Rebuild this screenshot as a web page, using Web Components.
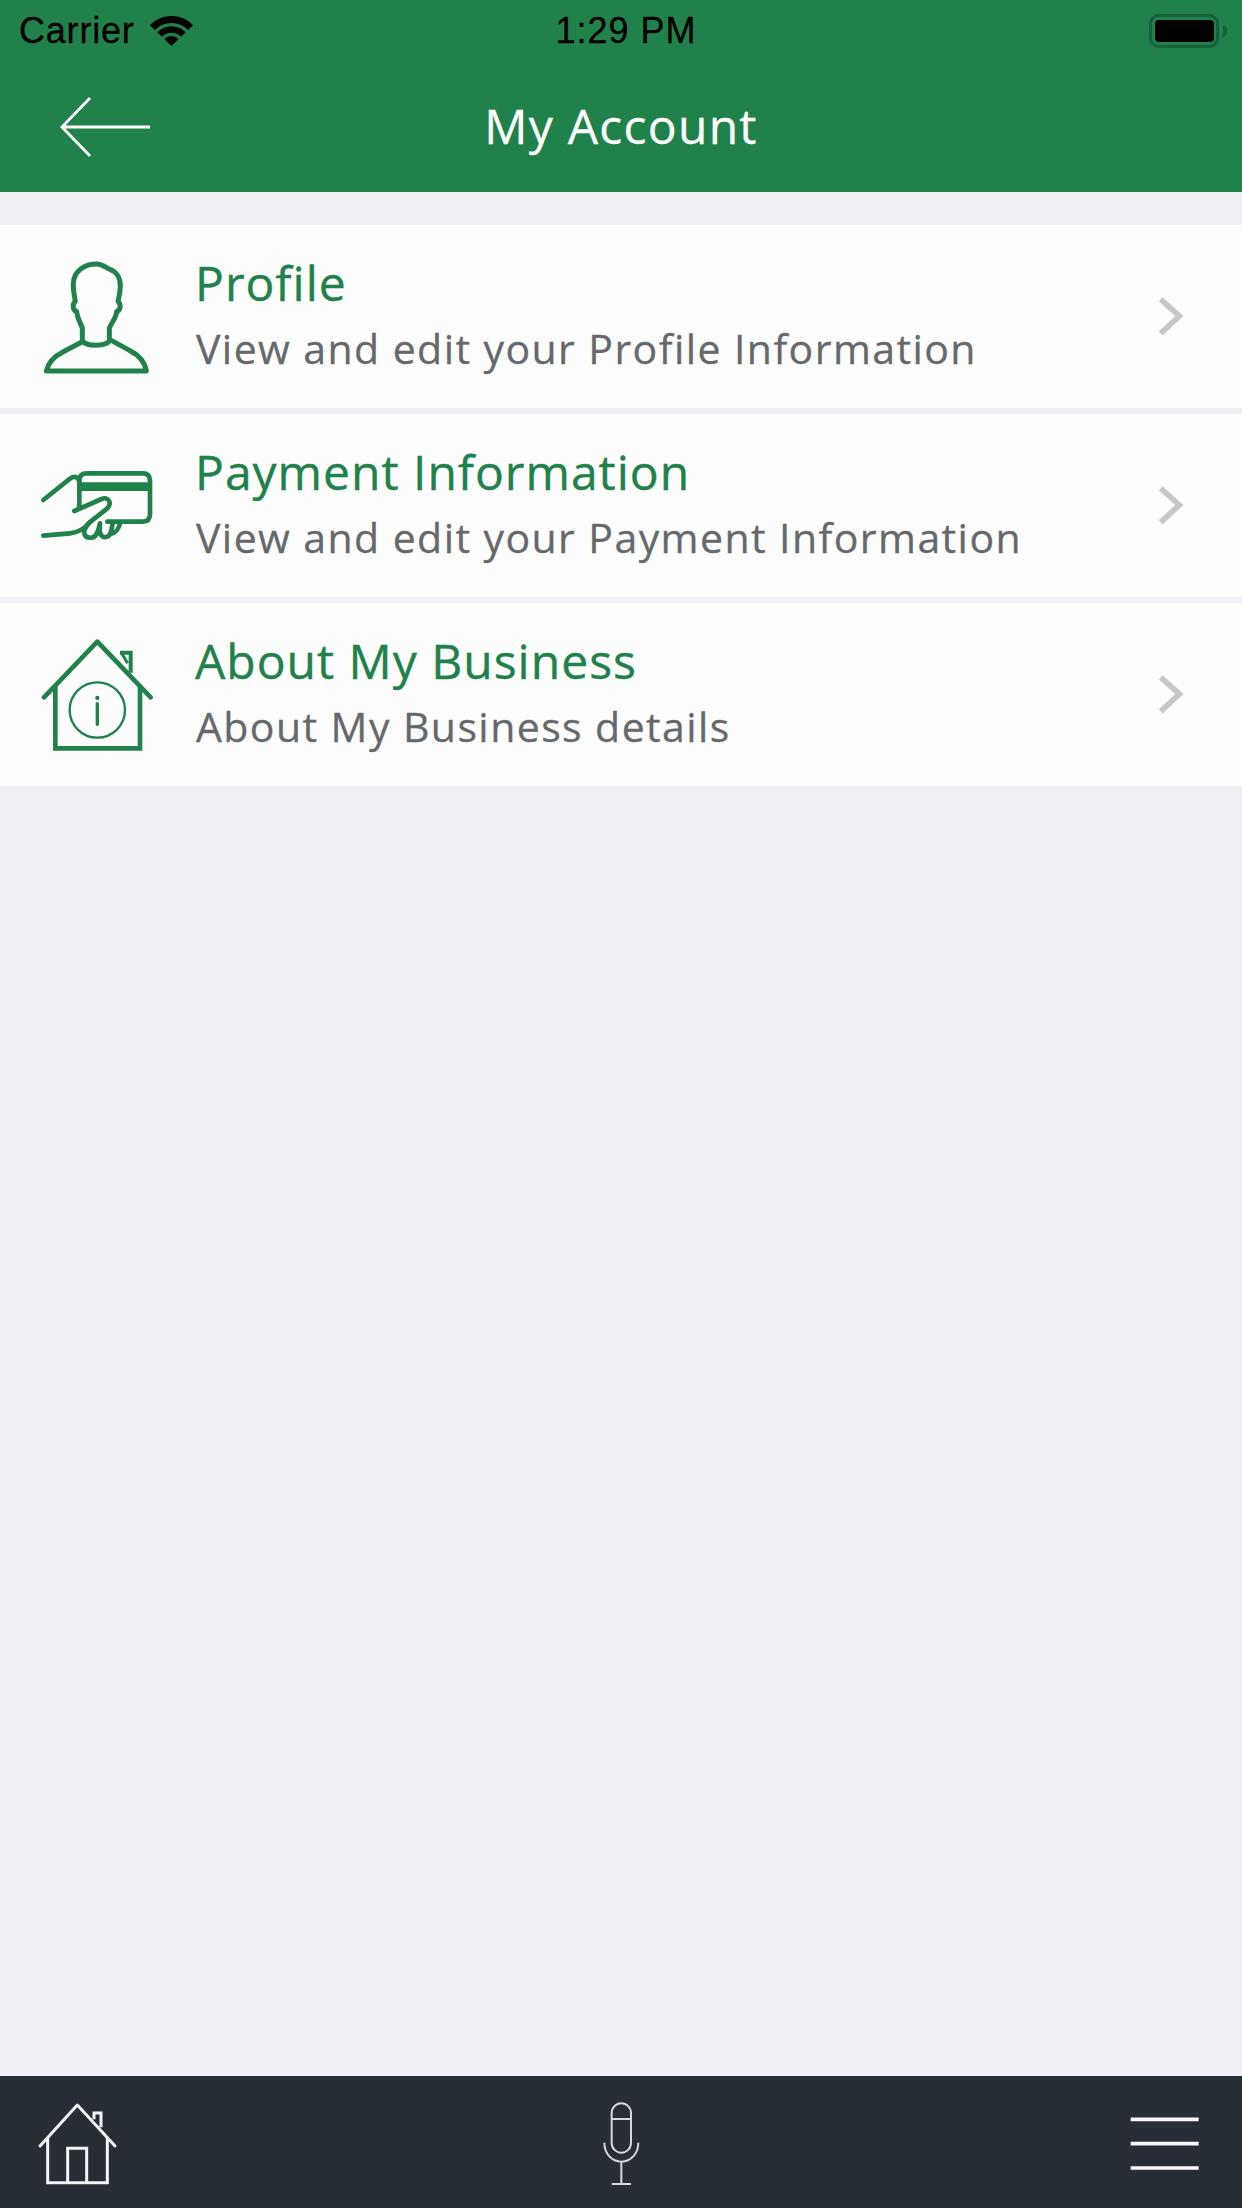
<!DOCTYPE html>
<html lang="en">
<head>
<meta charset="utf-8">
<title>My Account</title>
<style>
  html, body { margin: 0; padding: 0; }
  body { width: 1242px; height: 2208px; overflow: hidden; font-family: "Open Sans", "Noto Sans", sans-serif; }
</style>
</head>
<body>
<account-screen>
  <status-bar slot="header"></status-bar>
  <nav-bar slot="header">My Account</nav-bar>
  <account-row icon="profile">
    <span slot="title">Profile</span>
    View and edit your Profile Information
  </account-row>
  <account-row icon="card">
    <span slot="title">Payment Information</span>
    View and edit your Payment Information
  </account-row>
  <account-row icon="business">
    <span slot="title">About My Business</span>
    About My Business details
  </account-row>
  <tab-bar slot="footer"></tab-bar>
</account-screen>

<script>
// icon strokes are traced in the units of a 3x crop, hence the big viewBoxes
const ICONS = {
  profile: `<svg viewBox="0 -45 510 549" width="170" height="183" fill="none" stroke="#20824a" stroke-width="15" stroke-linejoin="round">
    <path d="M79 393C86 362 108 346 130 335L187 305V264C180 246 172 236 170 215C158 210 156 194 166 184C163 165 159 150 160 130C161 92 195 72 230 72C250 72 258 85 270 88C290 95 302 115 301 140C300 160 297 170 294 184C304 194 302 210 290 215C288 236 275 246 268 264V298L330 332C358 346 374 364 379 393Z"/>
    <path d="M187 302C200 320 255 320 270 302"/>
  </svg>`,
  card: `<svg viewBox="0 -78 510 549" width="170" height="183" fill="none" stroke="#20824a" stroke-width="14" stroke-linecap="round" stroke-linejoin="round">
    <path d="M178 200V122Q178 100 200 100H368Q390 100 390 122V223Q390 245 368 245H262"/>
    <path d="M178 140H390" stroke-width="26" stroke-linecap="butt"/>
    <path d="M70 180L150 116C165 105 178 112 178 130"/>
    <path d="M163 213L245 177C265 168 277 190 262 205L208 248C195 265 180 277 150 280L70 287"/>
    <path d="M208 248C180 280 195 295 215 293C232 292 236 270 240 250C235 290 250 295 262 290C275 285 275 265 278 248M300 250C296 268 290 278 272 282"/>
  </svg>`,
  business: `<svg viewBox="0 -51 510 549" width="170" height="183" fill="none" stroke="#20824a">
    <path d="M72 232L232 65L392 232" stroke-width="14" stroke-linecap="round" stroke-linejoin="round"/>
    <path d="M106 200V385H360V200" stroke-width="14"/>
    <path d="M300 98H332V158" stroke-width="12"/>
    <path d="M305 100L323 130" stroke-width="9"/>
    <circle cx="232" cy="270" r="83" stroke-width="7"/>
    <circle cx="232" cy="234" r="6.5" fill="#20824a" stroke="none"/>
    <path d="M232 251V313" stroke-width="10" stroke-linecap="round"/>
  </svg>`,
  chevron: `<svg viewBox="0 -135 336 549" width="112" height="183" fill="none" stroke="#c7c8cb" stroke-width="17">
    <path d="M92 88L148 138L92 190"/>
  </svg>`,
  home: `<svg viewBox="0 48 360 396" width="120" height="132" fill="none" stroke="#f4f5f5" stroke-width="9">
    <path d="M60 258L172 135L285 258" stroke-linecap="round" stroke-linejoin="round"/>
    <path d="M83 232V368H262V232M143 368V265H200V368M222 178V159H243V202"/>
  </svg>`,
  mic: `<svg viewBox="0 48 300 396" width="100" height="132" fill="none" stroke="#d6d8d9" stroke-width="6">
    <rect x="125" y="130" width="58" height="148" rx="29"/>
    <path d="M125 177H183M103 248C103 280 125 305 154 305C183 305 205 280 205 248M154 305V372M125 372H183"/>
  </svg>`,
  menu: `<svg viewBox="0 48 426 396" width="142" height="132" fill="none" stroke="#f7f8f8" stroke-width="11">
    <path d="M92 178H296M92 251H296M92 324H296"/>
  </svg>`
};

class AccountScreen extends HTMLElement {
  connectedCallback() {
    this.attachShadow({ mode: 'open' });
    this.shadowRoot.innerHTML = `
      <style>
        :host { display: flex; flex-direction: column; height: 2208px; background: #efeff4; }
        main { flex: 1; display: flex; flex-direction: column; gap: 6px; padding-top: 33px; }
      </style>
      <slot name="header"></slot>
      <main><slot></slot></main>
      <slot name="footer"></slot>
    `;
  }
}

class StatusBar extends HTMLElement {
  connectedCallback() {
    this.attachShadow({ mode: 'open' });
    this.shadowRoot.innerHTML = `
      <style>
        :host {
          display: grid;
          grid-template-columns: 1fr auto 1fr;
          align-items: center;
          height: 62px;
          padding: 0 15px 0 19px;
          background: #20824a;
          color: #000;
          font: 36px "Liberation Sans", Arial, sans-serif;
          letter-spacing: 0.8px;
          -webkit-text-stroke: 0.3px #000;
        }
        .left { display: flex; align-items: center; gap: 15px; }
        .time { padding-left: 6px; letter-spacing: 1px; }
        .battery { justify-self: end; display: block; }
      </style>
      <div class="left">
        <span>Carrier</span>
        <svg width="43" height="30" viewBox="0 0 43 30">
          <g fill="none" stroke="#000">
            <path d="M2.4 11.6A26.5 26.5 0 0 1 40.6 11.6" stroke-width="7"/>
            <path d="M9.6 18.5A16.5 16.5 0 0 1 33.4 18.5" stroke-width="6.5"/>
          </g>
          <path d="M21.5 30L14.3 23A10 10 0 0 1 28.7 23Z"/>
        </svg>
      </div>
      <span class="time">1:29 PM</span>
      <svg class="battery" width="78" height="34" viewBox="0 0 78 34">
        <rect x="1.5" y="1.5" width="67" height="31" rx="8" fill="none" stroke="#17603a" stroke-width="3"/>
        <rect x="6" y="6" width="59" height="22" rx="4" fill="#000"/>
        <path d="M74 11C77 12 78 14 78 17C78 20 77 22 74 23Z" fill="#17603a"/>
      </svg>
    `;
  }
}

class NavBar extends HTMLElement {
  connectedCallback() {
    this.attachShadow({ mode: 'open' });
    this.shadowRoot.innerHTML = `
      <style>
        :host {
          display: flex;
          align-items: center;
          justify-content: center;
          position: relative;
          height: 130px;
          padding-bottom: 3px;
          box-sizing: border-box;
          background: #20824a;
          color: #fff;
          font: 400 48px/1 "Open Sans", "Noto Sans", sans-serif;
          letter-spacing: 1.25px;
          -webkit-text-stroke: 0.3px #fff;
        }
        svg { position: absolute; left: 60px; top: 35px; }
      </style>
      <svg width="92" height="60" viewBox="0 0 92 60" fill="none" stroke="#fff" stroke-width="2.8">
        <path d="M30 1L2 30L30 59M2 30H90"/>
      </svg>
      <slot></slot>
    `;
  }
}

class AccountRow extends HTMLElement {
  connectedCallback() {
    this.attachShadow({ mode: 'open' });
    const icon = ICONS[this.getAttribute('icon')] || '';
    this.shadowRoot.innerHTML = `
      <style>
        :host { display: flex; align-items: center; height: 183px; padding-left: 20px; background: #fdfdfe; }
        .icon { width: 176px; height: 183px; flex: none; }
        .text { flex: 1; display: flex; flex-direction: column; padding-bottom: 3px; }
        .title { color: #20824a; font: 48px/66px "Open Sans", "Noto Sans", sans-serif; letter-spacing: 1px; margin-left: -1px; -webkit-text-stroke: 0.4px #20824a; }
        .sub { color: #66696b; font: 41px/65px "Open Sans", "Noto Sans", sans-serif; letter-spacing: 1.42px; -webkit-text-stroke: 0.3px #66696b; }
        .chevron { width: 112px; height: 183px; flex: none; }
      </style>
      <div class="icon">${icon}</div>
      <div class="text">
        <div class="title"><slot name="title"></slot></div>
        <div class="sub"><slot></slot></div>
      </div>
      <div class="chevron">${ICONS.chevron}</div>
    `;
  }
}

class TabBar extends HTMLElement {
  connectedCallback() {
    this.attachShadow({ mode: 'open' });
    this.shadowRoot.innerHTML = `
      <style>
        :host { display: flex; justify-content: space-between; height: 132px; padding-left: 20px; background: #272e36; }
        div { height: 132px; }
      </style>
      <div>${ICONS.home}</div>
      <div>${ICONS.mic}</div>
      <div>${ICONS.menu}</div>
    `;
  }
}

customElements.define('account-screen', AccountScreen);
customElements.define('status-bar', StatusBar);
customElements.define('nav-bar', NavBar);
customElements.define('account-row', AccountRow);
customElements.define('tab-bar', TabBar);
</script>
</body>
</html>
